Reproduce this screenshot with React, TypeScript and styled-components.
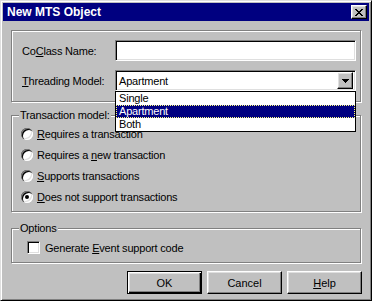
import styled, { createGlobalStyle, css } from 'styled-components'

const GlobalStyle = createGlobalStyle`
  html, body {
    margin: 0;
    padding: 0;
    background: #c0c0c0;
  }
  body {
    font-family: "Liberation Sans", Arial, sans-serif;
    font-size: 11px;
    letter-spacing: -0.2px;
    color: #000;
  }
`

// bevels
const raised = css`
  border: 1px solid;
  border-color: #fff #000 #000 #fff;
  box-shadow: inset -1px -1px #808080, inset 1px 1px #dfdfdf;
`

const sunken = css`
  border: 1px solid;
  border-color: #808080 #fff #fff #808080;
  box-shadow: inset 1px 1px #000, inset -1px -1px #dfdfdf;
`

const etched = css`
  border: 1px solid #808080;
  box-shadow: 1px 1px #fff, inset 1px 1px #fff;
`

const Window = styled.div`
  box-sizing: border-box;
  width: 372px;
  height: 301px;
  padding: 2px;
  background: #c0c0c0;
  border: 1px solid;
  border-color: #dfdfdf #000 #000 #dfdfdf;
  box-shadow: inset 1px 1px #fff, inset -1px -1px #808080;
  display: flex;
  flex-direction: column;
`

const TitleBar = styled.div`
  flex: none;
  height: 18px;
  background: #000080;
  display: flex;
  align-items: center;
  justify-content: space-between;
  padding: 0 2px 0 4px;
`

const Title = styled.span`
  color: #fff;
  font-weight: bold;
  font-size: 12px;
  letter-spacing: 0;
`

const CloseButton = styled.button`
  box-sizing: border-box;
  width: 16px;
  height: 14px;
  padding: 0;
  background: #c0c0c0;
  ${raised};
  display: flex;
  align-items: center;
  justify-content: center;
`

const Body = styled.div`
  flex: 1;
  display: flex;
  flex-direction: column;
  padding: 9px 7px 0 8px;
`

const Panel = styled.div`
  ${etched};
  margin-right: 1px;
  padding: 9px 4px 10px 10px;
  display: flex;
  flex-direction: column;
  gap: 9px;
`

const FieldRow = styled.div`
  display: flex;
  align-items: center;
`

const FieldLabel = styled.span`
  width: 93px;
  flex: none;
`

const TextBox = styled.div`
  box-sizing: border-box;
  width: 241px;
  height: 21px;
  background: #fff;
  ${sunken};
`

const ComboWrap = styled.div`
  position: relative;
`

const Combo = styled.div`
  box-sizing: border-box;
  width: 241px;
  height: 21px;
  background: #fff;
  ${sunken};
  padding: 2px;
  display: flex;
  align-items: center;
  justify-content: space-between;
`

const ComboText = styled.span`
  padding-left: 1px;
`

const DropButton = styled.span`
  box-sizing: border-box;
  width: 16px;
  height: 17px;
  background: #c0c0c0;
  ${raised};
  display: flex;
  align-items: center;
  justify-content: center;
`

const DropList = styled.ul`
  position: absolute;
  top: 100%;
  left: 0;
  z-index: 10;
  box-sizing: border-box;
  width: 241px;
  margin: 0;
  padding: 0;
  list-style: none;
  background: #fff;
  border: 1px solid #000;
`

const DropItem = styled.li<{ $selected?: boolean }>`
  height: 13px;
  line-height: 13px;
  padding-left: 3px;
  ${({ $selected }) =>
    $selected &&
    css`
      background: #000080;
      color: #fff;
      outline: 1px dotted #ffff80;
      outline-offset: -1px;
    `}
`

const Group = styled.fieldset`
  margin: 0 1px 0 0;
  padding: 0;
  min-width: 0;
  ${etched};
`

const Legend = styled.legend`
  margin-left: 7px;
  padding: 0 1px;
  line-height: 13px;
  background: #c0c0c0;
`

const OptionList = styled.div<{ $pad: string }>`
  display: flex;
  flex-direction: column;
  padding: ${({ $pad }) => $pad};
`

const RadioRow = styled.label`
  height: 21px;
  display: flex;
  align-items: center;
  gap: 4px;
`

const Radio = styled.span<{ $checked?: boolean }>`
  position: relative;
  flex: none;
  width: 12px;
  height: 12px;
  border-radius: 50%;
  background: #fff;
  box-shadow: inset 1px 1px #808080, inset 2px 2px #000, inset -1px -1px #fff,
    inset -2px -2px #dfdfdf;

  ${({ $checked }) =>
    $checked &&
    css`
      &::after {
        content: '';
        position: absolute;
        left: 4px;
        top: 4px;
        width: 4px;
        height: 4px;
        border-radius: 50%;
        background: #000;
      }
    `}
`

const CheckRow = styled.label`
  height: 13px;
  display: flex;
  align-items: center;
  gap: 5px;
`

const CheckBox = styled.span`
  box-sizing: border-box;
  flex: none;
  width: 13px;
  height: 13px;
  background: #fff;
  ${sunken};
`

const Acc = styled.span`
  text-decoration: underline;
`

const ButtonRow = styled.div`
  display: flex;
  justify-content: flex-end;
  gap: 5px;
  margin-top: 8px;
`

const PushButton = styled.button<{ $default?: boolean }>`
  box-sizing: border-box;
  width: 75px;
  height: 23px;
  padding: 0;
  font: inherit;
  color: #000;
  background: #c0c0c0;
  ${raised};

  ${({ $default }) =>
    $default &&
    css`
      border-color: #000;
      box-shadow: inset 1px 1px #fff, inset -1px -1px #000, inset -2px -2px #808080,
        inset 2px 2px #dfdfdf;
    `}
`

const Gap = styled.div<{ $h: number }>`
  height: ${({ $h }) => $h}px;
  flex: none;
`

function CloseGlyph() {
  const cells = [
    [0, 0], [1, 0], [6, 0], [7, 0],
    [1, 1], [2, 1], [5, 1], [6, 1],
    [2, 2], [3, 2], [4, 2], [5, 2],
    [3, 3], [4, 3],
    [2, 4], [3, 4], [4, 4], [5, 4],
    [1, 5], [2, 5], [5, 5], [6, 5],
    [0, 6], [1, 6], [6, 6], [7, 6],
  ]
  return (
    <svg width="8" height="7" viewBox="0 0 8 7" shapeRendering="crispEdges">
      {cells.map(([x, y]) => (
        <rect key={`${x}-${y}`} x={x} y={y} width="1" height="1" fill="#000" />
      ))}
    </svg>
  )
}

function ArrowGlyph() {
  return (
    <svg width="7" height="4" viewBox="0 0 7 4" shapeRendering="crispEdges">
      <rect x="0" y="0" width="7" height="1" fill="#000" />
      <rect x="1" y="1" width="5" height="1" fill="#000" />
      <rect x="2" y="2" width="3" height="1" fill="#000" />
      <rect x="3" y="3" width="1" height="1" fill="#000" />
    </svg>
  )
}

export default function App() {
  return (
    <>
      <GlobalStyle />
      <Window>
        <TitleBar>
          <Title>New MTS Object</Title>
          <CloseButton>
            <CloseGlyph />
          </CloseButton>
        </TitleBar>

        <Body>
          <Panel>
            <FieldRow>
              <FieldLabel>
                Co<Acc>C</Acc>lass Name:
              </FieldLabel>
              <TextBox />
            </FieldRow>
            <FieldRow>
              <FieldLabel>
                <Acc>T</Acc>hreading Model:
              </FieldLabel>
              <ComboWrap>
                <Combo>
                  <ComboText>Apartment</ComboText>
                  <DropButton>
                    <ArrowGlyph />
                  </DropButton>
                </Combo>
                <DropList>
                  <DropItem>Single</DropItem>
                  <DropItem $selected>Apartment</DropItem>
                  <DropItem>Both</DropItem>
                </DropList>
              </ComboWrap>
            </FieldRow>
          </Panel>

          <Gap $h={7} />

          <Group>
            <Legend>Transaction model:</Legend>
            <OptionList $pad="1px 0 4px 9px">
              <RadioRow>
                <Radio />
                <span>
                  <Acc>R</Acc>equires a transaction
                </span>
              </RadioRow>
              <RadioRow>
                <Radio />
                <span>
                  Requires a <Acc>n</Acc>ew transaction
                </span>
              </RadioRow>
              <RadioRow>
                <Radio />
                <span>
                  <Acc>S</Acc>upports transactions
                </span>
              </RadioRow>
              <RadioRow>
                <Radio $checked />
                <span>
                  <Acc>D</Acc>oes not support transactions
                </span>
              </RadioRow>
            </OptionList>
          </Group>

          <Gap $h={10} />

          <Group>
            <Legend>Options</Legend>
            <OptionList $pad="6px 0 8px 15px">
              <CheckRow>
                <CheckBox />
                <span>
                  Generate <Acc>E</Acc>vent support code
                </span>
              </CheckRow>
            </OptionList>
          </Group>

          <ButtonRow>
            <PushButton $default>OK</PushButton>
            <PushButton>Cancel</PushButton>
            <PushButton>
              <Acc>H</Acc>elp
            </PushButton>
          </ButtonRow>
        </Body>
      </Window>
    </>
  )
}
